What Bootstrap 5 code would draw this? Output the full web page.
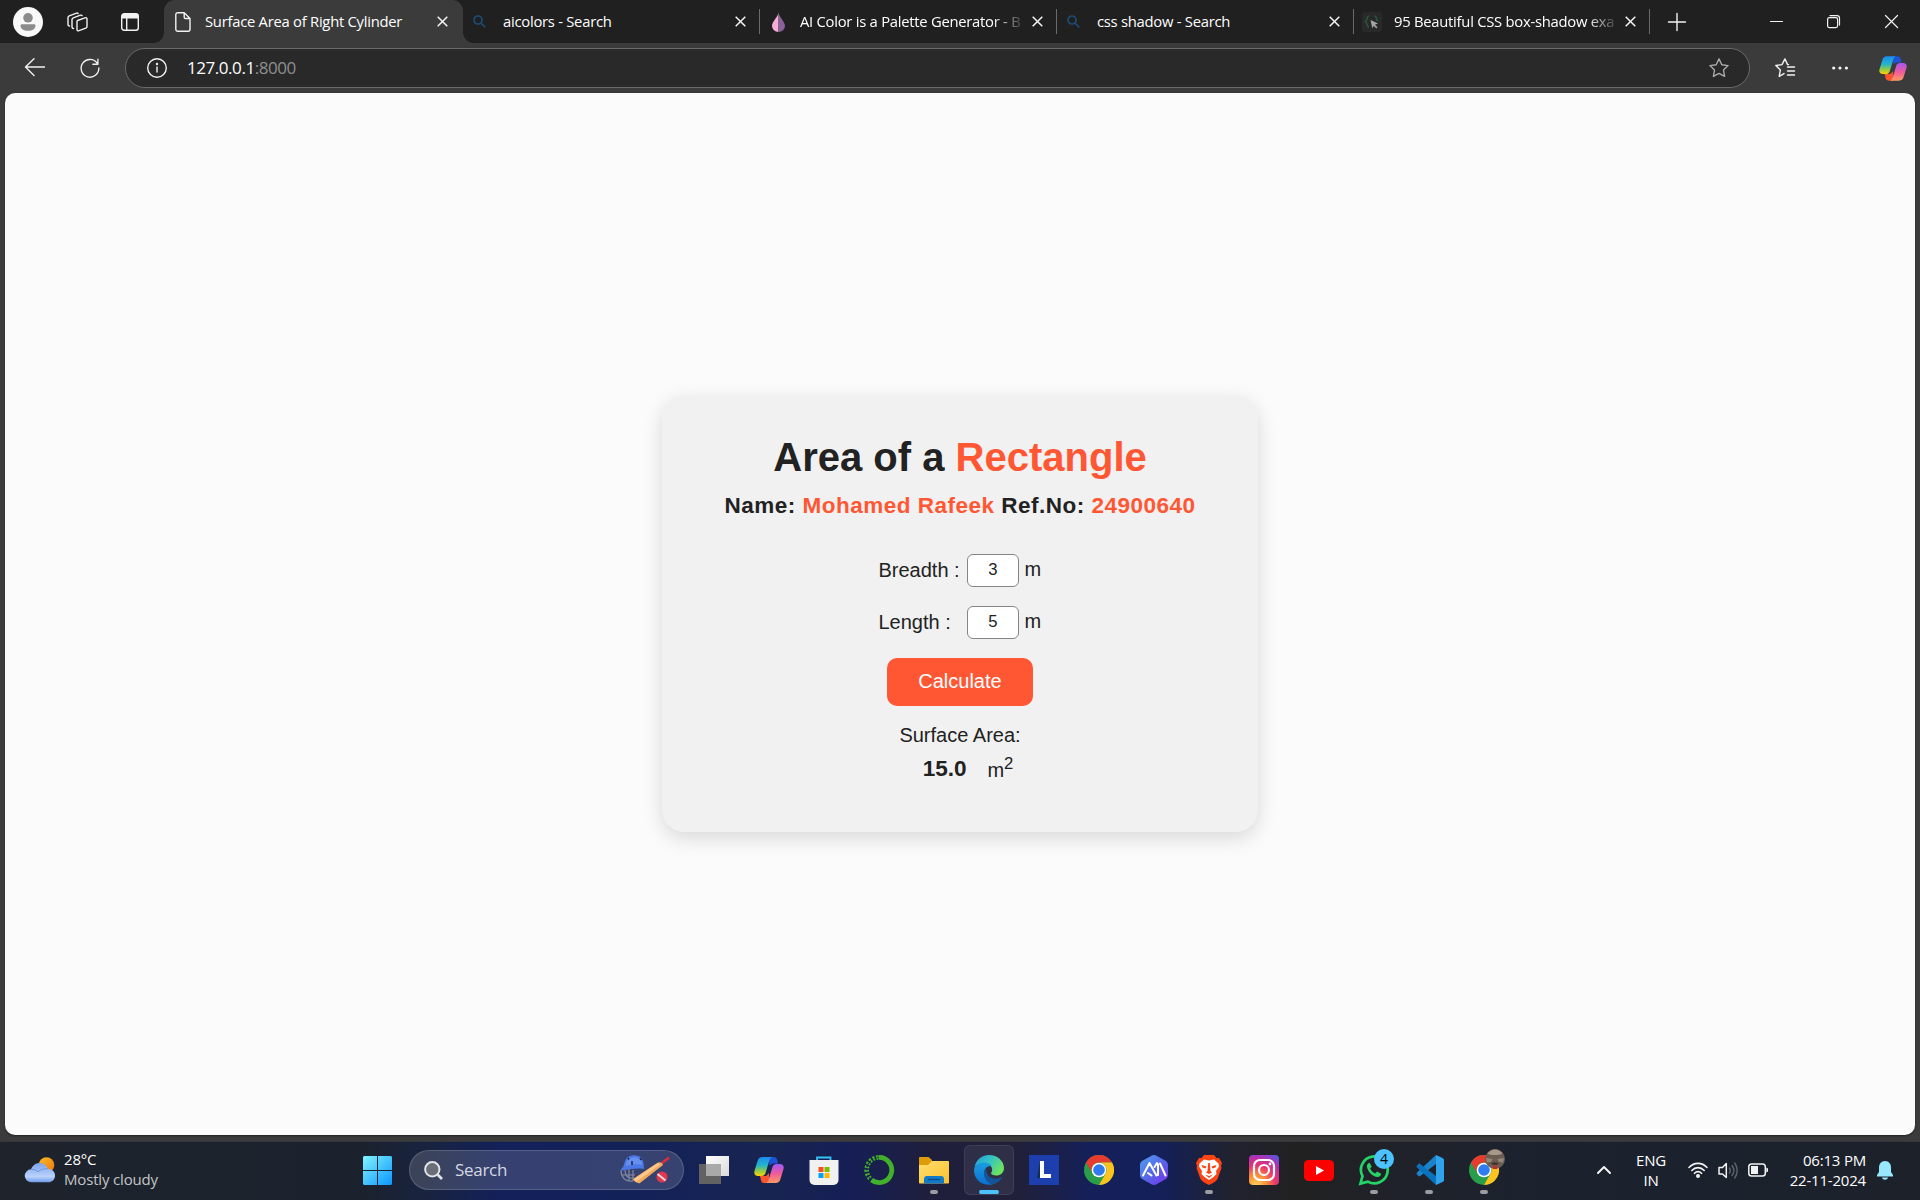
<!DOCTYPE html>
<html lang="en">
<head>
<meta charset="utf-8">
<title>Surface Area of Right Cylinder</title>
<link href="https://cdn.jsdelivr.net/npm/bootstrap@5.3.0/dist/css/bootstrap.min.css" rel="stylesheet">
<style>
  body { width: 1920px; height: 1200px; overflow: hidden; background: #3b3b3b; font-family: "Open Sans", "Noto Sans", sans-serif; color: #fff; }
  svg { display: block; flex: none; overflow: visible; }
  .ln { fill: none; stroke: #f2f2f2; stroke-width: 1.4; stroke-linecap: round; stroke-linejoin: round; }
  .strip { height: 43px; background: #202020; }
  .strip-tools { width: 164px; padding-left: 13px; }
  .tab { width: 297px; height: 43px; padding-left: 8px; font-size: 14.8px; letter-spacing: -.26px; position: relative; }
  .tab-icon { width: 20px; margin-right: 12px; display: flex; justify-content: center; flex: none; }
  .tab-title { width: 223px; white-space: nowrap; overflow: hidden; line-height: 24px; margin-top: -2px; }
  .fade-end { -webkit-mask-image: linear-gradient(90deg, #000 193px, transparent 226px); mask-image: linear-gradient(90deg, #000 193px, transparent 226px); }
  .tab-x { margin-left: 9px; }
  .tab-live { width: 299px; padding-left: 9px; background: #3b3b3b; border-radius: 11px 11px 0 0; }
  .tab-live::before, .tab-live::after { content: ""; position: absolute; bottom: 0; width: 10px; height: 10px; }
  .tab-live::before { left: -10px; background: radial-gradient(circle at 0 0, transparent 9.5px, #3b3b3b 10px); }
  .tab-live::after { right: -10px; background: radial-gradient(circle at 100% 0, transparent 9.5px, #3b3b3b 10px); }
  .tab-sep { border-right: 1px solid #6a6a6a; height: 25px; margin-left: auto; }
  .toolbar { height: 50px; padding-left: 24px; }
  .address { width: 1625px; height: 40px; border: 1px solid #696969; border-radius: 20px; background: #292929; margin-left: 24px; padding-left: 21px; padding-right: 20px; font-size: 17px; letter-spacing: -.45px; }
  .address-text { margin-left: 20px; line-height: 24px; margin-top: -1px; }
  .port { color: #909090; }
  .page { margin: 0 5px; height: 1042px; background: #fbfbfb; border-radius: 10px; font-family: "Liberation Sans", Arial, sans-serif; color: #222; box-shadow: 0 1px 2px #222; }
  .calc { width: 596px; height: 436px; margin-top: 303px; padding-top: 38px; background: #f1f1f1; border-radius: 22px; box-shadow: 0 6px 20px rgba(0,0,0,.14); font-size: 20px; }
  .calc h1 { font-size: 40px; line-height: 46px; font-weight: 700; margin: 0 0 12px; }
  .calc h2 { font-size: 22.5px; line-height: 27px; font-weight: 700; letter-spacing: .5px; margin: 0 0 35px; }
  .hot { color: #ff5733; }
  .field { height: 33px; width: 163px; margin-bottom: 19px; }
  .field label { width: 88px; line-height: 33px; white-space: nowrap; }
  .field input { width: 52px; height: 33px; padding: 0 0 2px 1px; border: 1px solid #858585; border-radius: 6px; text-align: center; font-size: 16.67px; color: #222; background: #fff; margin-right: 6px; }
  .field span { line-height: 31px; }
  .go { width: 146px; height: 48px; background: #ff5733; color: #fff; border: 0; border-radius: 10px; font-size: 20px; padding: 0 0 2px; }
  .go:hover { background: #ff5733; color: #fff; }
  .res-label { line-height: 24px; margin-top: 17px; }
  .res { line-height: 30px; margin-top: 6px; height: 30px; padding-left: 16px; }
  .res b { font-size: 22.5px; margin-right: 21px; margin-top: 1px; }
  .res span { margin-top: 2px; }
  .res sup { font-size: 16.67px; top: -.5em; }
  .taskbar { height: 59px; margin-top: 6px; padding-bottom: 2px; border-top: 1px solid #34373d;
    background: linear-gradient(90deg, #1e232c 0, #1b222d 360px, #182340 430px, #13205a 500px, #132159 640px, #182450 770px, #161f56 850px, #1f1f3c 930px, #20203a 1020px, #15205a 1090px, #13205a 1160px, #20222f 1230px, #212121 1300px, #20222a 1400px, #1b222e 1540px, #1c212a 1920px); }
  .weather { width: 338px; padding-left: 25px; font-size: 15px; line-height: 20px; }
  .weather-text { margin-left: 9px; letter-spacing: -.17px; margin-top: -2px; }
  .sub { color: #c3c5c8; }
  .find { width: 275px; height: 40px; margin-left: 17px; border-radius: 20px; border: 1px solid rgba(255,255,255,.16); background: rgba(255,255,255,.15); padding-left: 14px; padding-right: 13px; font-size: 17px; color: #d5d8e2; }
  .find-text { margin-left: 12px; letter-spacing: -.3px; margin-top: 0; line-height: 24px; }
  .apps { margin-left: 2px; }
  .app { width: 55px; height: 56px; position: relative; }
  .app-open { width: 50px; height: 50px; border-radius: 6px; background: rgba(255,255,255,.07); border: 1px solid rgba(255,255,255,.08); display: flex; align-items: center; justify-content: center; }
  .run::after { content: ""; position: absolute; left: 23.5px; bottom: 4px; width: 8px; height: 4px; border-radius: 2px; background: #9b9ca3; }
  .run-live::after { left: 17.5px; width: 20px; background: #4cc2ff; }
  .count { position: absolute; left: 28px; top: 7px; width: 20px; height: 20px; border-radius: 50%; background: #4cc2ff; color: #000; font-size: 14px; line-height: 20px; text-align: center; }
  .face { position: absolute; left: 29px; top: 7px; }
  .tray { margin-left: auto; padding-right: 27px; font-size: 15px; line-height: 20px; letter-spacing: -.2px; }
  .tray-text { margin-top: -1px; }
</style>
<script src="https://cdn.jsdelivr.net/npm/bootstrap@5.3.0/dist/js/bootstrap.bundle.min.js"></script>
</head>
<body>
<svg width="0" height="0" class="position-absolute">
  <defs>
    <linearGradient id="cpA" x1="0" y1="0" x2="0" y2="1"><stop offset="0" stop-color="#1a8cf0"/><stop offset=".45" stop-color="#25b6c8"/><stop offset=".72" stop-color="#8ccb4b"/><stop offset="1" stop-color="#ffd000"/></linearGradient>
    <linearGradient id="cpB" x1="0" y1="0" x2="0" y2="1"><stop offset="0" stop-color="#a259f7"/><stop offset=".5" stop-color="#ee5a9c"/><stop offset="1" stop-color="#ff9a62"/></linearGradient>
    <symbol id="copilot" viewBox="0 0 30 28">
      <path d="M15 1h5c2 0 2.800 1.500 3.300 3L24 7.500h-5.500l-3 2z" fill="#1f52d8"/>
      <path d="M15 27h-5c-2 0-2.600-1.300-3.100-3L6 20h6l3-3z" fill="#f8552f"/>
      <path d="M8.500 1H18c-1.600.7-2.200 2-2.800 4L11.500 17c-.6 2-2 3-4 3H4c-3 0-4.200-2.200-3.500-5L3.600 4.800C4.300 2.300 6 1 8.500 1z" fill="url(#cpA)"/>
      <path d="M21.500 27H12c1.600-.7 2.200-2 2.800-4L18.500 11c.6-2 2-3 4-3H26c3 0 4.200 2.200 3.500 5l-3.100 10.200C25.700 25.700 24 27 21.500 27z" fill="url(#cpB)"/>
    </symbol>
    <symbol id="chrome" viewBox="0 0 30 30">
      <circle cx="15" cy="15" r="15" fill="#2a9d4b"/>
      <path d="M2 7.500A15 15 0 0 1 28 7.500H15A7.500 7.500 0 0 0 8.500 18.750z" fill="#e63b2e"/>
      <path d="M28 7.500A15 15 0 0 1 15 30L21.500 18.750A7.500 7.500 0 0 0 15 7.500z" fill="#fcc31e"/>
      <circle cx="15" cy="15" r="7.300" fill="#fff"/><circle cx="15" cy="15" r="5.800" fill="#2f7bf0"/>
    </symbol>
    <symbol id="closeX" viewBox="0 0 11 11"><path d="M.7.7l9.600 9.600M10.300.7L.7 10.300" fill="none" stroke="#f4f4f4" stroke-width="1.500"/></symbol>
    <symbol id="lens" viewBox="0 0 13 13"><g fill="none" stroke="#1c4c75" stroke-width="1.700"><circle cx="5" cy="5" r="4"/><path d="M8 8l4.300 4.300"/></g></symbol>
  </defs>
</svg>

<header>
  <div class="strip d-flex align-items-center">
    <div class="strip-tools d-flex align-items-center">
      <svg width="30" height="30" viewBox="0 0 30 30"><circle cx="15" cy="15" r="15" fill="#f8f8f8"/><circle cx="15" cy="10.800" r="4.800" fill="#8b8b8b"/><path d="M9 17.200h12c1 0 1.500.6 1.500 1.500 0 3-3 5.100-7.500 5.100s-7.500-2.100-7.500-5.100c0-.9.500-1.500 1.500-1.500z" fill="#8b8b8b"/></svg>
      <svg class="ln" style="margin-left:24px" width="21" height="20" viewBox="0 0 21 20"><path d="M10.500 8.500l7.500-2.700c1.200-.4 2 .1 2 1.200v7.500c0 .8-.4 1.400-1.200 1.700l-6.800 2.500c-1.200.4-2-.1-2-1.200V9.700c0-.6.100-1 .5-1.200zM6.500 16.500c-1 0-1.500-.5-1.500-1.500V7.500c0-.8.500-1.400 1.300-1.700l7.200-2.600c.7-.2 1.300 0 1.600.5M2.500 14C1.500 14 1 13.500 1 12.500V5.500c0-.8.400-1.400 1.200-1.700l7.300-2.600c.7-.3 1.300-.1 1.600.4"/></svg>
      <svg style="margin-left:33px" width="18" height="18" viewBox="0 0 18 18"><rect x=".7" y=".7" width="16.600" height="16.600" rx="2.500" class="ln"/><path d="M1 1h16v4.500H1zM5 5h1.400v12H5z" fill="#f2f2f2"/></svg>
    </div>
    <div class="tab tab-live d-flex align-items-center">
      <span class="tab-icon"><svg class="ln" width="16" height="20" viewBox="0 0 16 20"><path d="M2.500.8h6.700L15 6.500v10.800c0 1.200-.7 1.900-1.900 1.900H2.800C1.600 19.200.8 18.500.8 17.300V2.600C.8 1.500 1.400.8 2.500.8zM9.200 1v4.200c0 .8.500 1.300 1.300 1.300h4.300"/></svg></span>
      <span class="tab-title">Surface Area of Right Cylinder</span>
      <svg class="tab-x" width="11" height="11"><use href="#closeX"/></svg>
    </div>
    <div class="tab d-flex align-items-center">
      <span class="tab-icon pe-1"><svg width="13" height="13"><use href="#lens"/></svg></span>
      <span class="tab-title">aicolors - Search</span>
      <svg class="tab-x" width="11" height="11"><use href="#closeX"/></svg>
      <span class="tab-sep"></span>
    </div>
    <div class="tab d-flex align-items-center">
      <span class="tab-icon"><svg width="13" height="20" viewBox="0 0 13 20"><path d="M6.500 0C6.500 5 0 9 0 14a6.500 6 0 0 0 6.500 6z" fill="#f5aed6"/><path d="M6.500 0c0 5 6.500 9 6.500 14a6.500 6 0 0 1-6.500 6z" fill="#8a6199"/></svg></span>
      <span class="tab-title fade-end">AI Color is a Palette Generator - B</span>
      <svg class="tab-x" width="11" height="11"><use href="#closeX"/></svg>
      <span class="tab-sep"></span>
    </div>
    <div class="tab d-flex align-items-center">
      <span class="tab-icon pe-1"><svg width="13" height="13"><use href="#lens"/></svg></span>
      <span class="tab-title">css shadow - Search</span>
      <svg class="tab-x" width="11" height="11"><use href="#closeX"/></svg>
      <span class="tab-sep"></span>
    </div>
    <div class="tab d-flex align-items-center" style="width:296px">
      <span class="tab-icon"><svg width="20" height="20" viewBox="0 0 20 20"><rect width="20" height="20" rx="3" fill="#292929"/><path d="M7 4C4.500 4 5.500 8.500 3.500 9.500 5.500 10.500 4.500 15 7 15M12.500 4c2.500 0 1.500 4 3.500 5" fill="none" stroke="#245a39" stroke-width="1.500"/><path d="M8.500 8l7.500 3.500-3 1.200 2.500 2.500-1.300 1.200-2.400-2.600-1.500 2.500z" fill="#a5a5a5"/></svg></span>
      <span class="tab-title fade-end">95 Beautiful CSS box-shadow exa</span>
      <svg class="tab-x ms-2" width="11" height="11"><use href="#closeX"/></svg>
      <span class="tab-sep"></span>
    </div>
    <svg class="ln" style="margin-left:18px" width="18" height="18" viewBox="0 0 18 18"><path d="M9 .5v17M.5 9h17"/></svg>
    <svg class="ln" style="margin-left:84px" width="13" height="13" viewBox="0 0 13 13"><path d="M.5 6.500h12" stroke-width="1.200"/></svg>
    <svg class="ln" style="margin-left:44px;stroke-width:1.200" width="13" height="13" viewBox="0 0 13 13"><rect x=".6" y="2.600" width="10" height="10" rx="1.800"/><path d="M3 .6h7c1.500 0 2.500 1 2.500 2.500v7"/></svg>
    <svg class="ln" style="margin-left:45px;stroke-width:1.200" width="13" height="13" viewBox="0 0 13 13"><path d="M.5.5l12 12M12.500.5l-12 12"/></svg>
  </div>

  <div class="toolbar d-flex align-items-center">
    <svg class="ln" width="21" height="20" viewBox="0 0 21 20"><path d="M20.500 9H1.500M10 .8L1.500 9l8.500 8.500"/></svg>
    <svg class="ln" style="margin-left:35px" width="20" height="21" viewBox="0 0 21 21"><path d="M18 4.800A9.300 9.300 0 1 0 19.800 10M18.800.8V6h-5.300"/></svg>
    <div class="address d-flex align-items-center" style="margin-left:25px">
      <svg class="ln" width="20" height="20" viewBox="0 0 20 20"><circle cx="10" cy="10" r="9.300"/><path d="M10 9v5"/><circle cx="10" cy="6" r=".5"/></svg>
      <span class="address-text">127.0.0.1<span class="port">:8000</span></span>
      <svg class="ms-auto ln" style="stroke:#aaa" width="20" height="20" viewBox="0 0 20 20"><path d="M10 .9l2.800 5.800 6.300.9-4.600 4.400 1.100 6.400L10 15.400l-5.600 3 1.100-6.400L.9 7.600l6.300-.9z"/></svg>
    </div>
    <svg class="ln" style="margin-left:25px" width="20" height="20" viewBox="0 0 20 20"><path d="M9 15.600l-4.800 2.800 1.200-6.500L.8 7.500l6.200-.9L9.900.9l2.700 5.700M12.500 9h7M12.500 13h7M12.500 17h7M12.600 6.600h1"/></svg>
    <svg style="margin-left:37px" width="16" height="4" viewBox="0 0 16 4" fill="#f4f4f4"><circle cx="1.700" cy="2" r="1.600"/><circle cx="8" cy="2" r="1.600"/><circle cx="14.400" cy="2" r="1.600"/></svg>
    <svg style="margin-left:31px" width="28" height="27"><use href="#copilot"/></svg>
  </div>
</header>

<main class="page d-flex justify-content-center align-items-start">
  <section class="calc d-flex flex-column align-items-center">
    <h1>Area of a <span class="hot">Rectangle</span></h1>
    <h2>Name: <span class="hot">Mohamed Rafeek</span> Ref.No: <span class="hot">24900640</span></h2>
    <div class="field d-flex"><label for="b">Breadth :</label><input id="b" type="text" value="3"><span>m</span></div>
    <div class="field d-flex"><label for="l">Length :</label><input id="l" type="text" value="5"><span>m</span></div>
    <button class="btn go" type="button">Calculate</button>
    <div class="res-label">Surface Area:</div>
    <div class="res d-flex"><b>15.0</b><span>m<sup>2</sup></span></div>
  </section>
</main>

<footer class="taskbar d-flex align-items-center">
  <div class="weather d-flex align-items-center">
    <svg width="30" height="26" viewBox="0 0 30 26"><defs><linearGradient id="sun" x1="0" y1="0" x2="1" y2="1"><stop offset="0" stop-color="#fbbd22"/><stop offset="1" stop-color="#ee7410"/></linearGradient><linearGradient id="cl" x1="0" y1="0" x2="0" y2="1"><stop offset="0" stop-color="#7da5ec"/><stop offset=".7" stop-color="#b9d2fb"/><stop offset="1" stop-color="#6e9bea"/></linearGradient></defs><circle cx="21.500" cy="8" r="7.800" fill="url(#sun)"/><path d="M6.500 25.300a6.500 6.500 0 0 1-.5-13c1.500-3.800 4.500-6.300 8.500-6.300 4.200 0 7 2.400 8.200 5.800 4.300.1 7.300 3 7.300 6.700 0 4-3 6.800-7 6.800z" fill="url(#cl)"/><path d="M6 12.300c3 0 5 .8 7 2.500 2-2 5-3.300 9.700-3" fill="none" stroke="#6a93e4" stroke-width="1"/></svg>
    <div class="weather-text">28°C<br><span class="sub">Mostly cloudy</span></div>
  </div>
  <svg style="margin-left:25px" width="29" height="29" viewBox="0 0 29 29"><defs><linearGradient id="win" gradientUnits="userSpaceOnUse" x1="0" y1="0" x2="29" y2="29"><stop offset="0" stop-color="#82f3ff"/><stop offset="1" stop-color="#0a96ff"/></linearGradient></defs><path d="M1 0h13v14H0V1zM15 0h13l1 1v13H15zM0 15h14v14H1l-1-1zM15 15h14v13l-1 1H15z" fill="url(#win)"/></svg>
  <div class="find d-flex align-items-center">
    <svg width="19" height="19" viewBox="0 0 19 19" fill="none" stroke="#e3e4e8" stroke-width="2"><circle cx="8.300" cy="8.300" r="7.200" fill="#6b7078"/><path d="M13.500 13.500l4.500 4.500" stroke-width="2.600"/></svg>
    <span class="find-text">Search</span>
    <svg class="ms-auto" width="50" height="30" viewBox="0 0 50 30"><g fill="none" stroke="#84889f" stroke-width="1.200"><path d="M1 15c0 6 3 12 12 11M5 15c0 5 2 9 9 8M2 20h13M9 14v12M13 15v11"/></g><path d="M1 14C4 12 4 9 5 6c2-5 8-7 13-5 5 1 6 7 6 13-6-1-14 0-22 1.500z" fill="#4c78e6"/><path d="M6 8c2-5 7-7 12-5 3 1.500 4 4 4 7-5-1-11-1-16 1z" fill="#6590f0"/><path d="M12 6v4M20 3l1.500 2M8 3l1 1.500" stroke="#18254e" stroke-width="1.500"/><path d="M42 8l7-5.500" stroke="#dc2d3e" stroke-width="2.600"/><path d="M13 24L37 8c2-1.300 4-1 5 0l1 2-23 18c-2 1-7-2-7-4z" fill="#f3a85c"/><path d="M14 24L38 8l2 1.500L16 27z" fill="#ffc98a"/><circle cx="42" cy="22" r="5.500" fill="#e2374d"/><path d="M37.500 19l8 6.500" stroke="#ffd8dc" stroke-width="2"/></svg>
  </div>

  <div class="apps d-flex">
    <div class="app d-flex align-items-center justify-content-center"><svg width="30" height="28" viewBox="0 0 30 28"><defs><linearGradient id="tv" x1="0" y1="0" x2="1" y2="1"><stop offset="0" stop-color="#fff"/><stop offset="1" stop-color="#d9d9d9"/></linearGradient></defs><path d="M0 8h22v20H0z" fill="#626262"/><path d="M7 0h23v20H7z" fill="url(#tv)"/><path d="M7 8h15v12H7z" fill="#a9a9a9"/></svg></div>
    <div class="app d-flex align-items-center justify-content-center"><svg width="30" height="28"><use href="#copilot"/></svg></div>
    <div class="app d-flex align-items-center justify-content-center"><svg width="30" height="30" viewBox="0 0 30 30"><path d="M8 7V2.500h13.500V7" fill="none" stroke="#35c3f3" stroke-width="1.800"/><path d="M.5 5h29v20a5 5 0 0 1-5 5h-19a5 5 0 0 1-5-5z" fill="#f1f1f1"/><path d="M9.500 12h5v5h-5z" fill="#f25022"/><path d="M15.500 12h5v5h-5z" fill="#7fba00"/><path d="M9.500 18h5v5h-5z" fill="#00a4ef"/><path d="M15.500 18h5v5h-5z" fill="#ffb900"/></svg></div>
    <div class="app d-flex align-items-center justify-content-center"><svg width="30" height="30" viewBox="0 0 30 30" fill="none" stroke="#43b02a"><path d="M14.500 2.400a12.600 12.600 0 1 1-7 22.600" stroke-width="4.800"/><path d="M6 23.500A12.600 12.600 0 0 1 14 2.400" stroke-width="4.600" stroke-dasharray="2.200 1.500"/><path d="M6 23.500A12.600 12.600 0 0 1 14 2.400" stroke="#171e50" stroke-width="1.200" stroke-dasharray="1.500 1.500"/></svg></div>
    <div class="app run d-flex align-items-center justify-content-center"><svg width="30" height="30" viewBox="0 0 30 30"><defs><linearGradient id="fo" x1="0" y1="0" x2="1" y2="1"><stop offset="0" stop-color="#ffdf70"/><stop offset="1" stop-color="#fbc02d"/></linearGradient></defs><path d="M0 3c0-.6.400-1 1-1h8.500L13 5v6H0z" fill="#dd9c08"/><path d="M0 10h9l4-4h16c.6 0 1 .4 1 1v20.500c0 .6-.4 1-1 1H1c-.6 0-1-.4-1-1z" fill="url(#fo)"/><path d="M5 28.500V24c0-1.800 1.200-3 3-3h14c1.800 0 3 1.200 3 3v4.500z" fill="#1279c9"/><path d="M9 24.500h12" stroke="#0a4d87" stroke-width="1.300"/></svg></div>
    <div class="app run run-live d-flex align-items-center justify-content-center"><div class="app-open"><svg width="30" height="30" viewBox="0 0 30 30"><defs><linearGradient id="e1" x1="0" y1="0" x2="1" y2=".5"><stop offset="0" stop-color="#239bd8"/><stop offset=".5" stop-color="#33c1c7"/><stop offset="1" stop-color="#6ce262"/></linearGradient><linearGradient id="e2" x1="0" y1="0" x2="0" y2="1"><stop offset="0" stop-color="#1b9de2"/><stop offset="1" stop-color="#0b6fd0"/></linearGradient></defs><path d="M.5 12.500C1.700 5 7.500 0 15 0c8.800 0 15 6.200 15 13 0 5-3.800 7.500-7.800 7.500-3.200 0-5.200-1-5.200-2.200 0-.8 1.200-1.300 1.200-3.600 0-3.500-3.500-6.200-8-6.200-4.600 0-8.500 1.500-9.700 4z" fill="url(#e1)"/><path d="M0 15C.2 10.500 4.500 7.500 10 7.500c3.500 0 6.300 1.300 7.700 3.600-4-.8-7.400 2.200-7.400 6.600 0 5 2.800 9.500 8.200 11.800C8.500 31.500 0 25 0 15z" fill="url(#e2)"/><path d="M12 13.500c-3 3-2.300 9 1.500 13 1.300 1.400 3 2.500 5 3 3.800-.9 7.100-3.300 9.200-6.300.6-.9.100-1.300-.8-.8-6.500 3.400-14.700.4-14.900-8.900z" fill="#125599"/></svg></div></div>
    <div class="app d-flex align-items-center justify-content-center"><svg width="30" height="30" viewBox="0 0 30 30"><path d="M0 0h30v30H0z" fill="#1d3fae"/><path d="M11 6L8 23h8z" fill="#0b2f55"/><path d="M11 6h4v13h7v4H11z" fill="#fff"/></svg></div>
    <div class="app d-flex align-items-center justify-content-center"><svg width="30" height="30"><use href="#chrome"/></svg></div>
    <div class="app d-flex align-items-center justify-content-center"><svg width="30" height="30" viewBox="0 0 30 30"><defs><linearGradient id="ai" x1="0" y1="0" x2="1" y2="1"><stop offset="0" stop-color="#4fa3ee"/><stop offset=".5" stop-color="#5668e8"/><stop offset="1" stop-color="#7a2ff0"/></linearGradient></defs><path d="M12.500.7c1.600-.9 3.400-.9 5 0l9 5C28 6.600 29 8 29 10v10c0 2-1 3.400-2.500 4.300l-9 5c-1.600.9-3.400.9-5 0l-9-5C2 23.400 1 22 1 20V10c0-2 1-3.400 2.500-4.300z" fill="url(#ai)"/><path d="M4 20.500l6.500-12.500 7 12.500M9 18l3.500 2.500M15.500 12l2.500-4 1 1.500V20M21 8.500l5.500 12" fill="none" stroke="#fff" stroke-width="2" stroke-linecap="round" stroke-linejoin="round"/></svg></div>
    <div class="app run d-flex align-items-center justify-content-center"><svg width="26" height="30" viewBox="0 0 26 30"><path d="M8 0h10l2.500 3L23 3l3 5-1 3 .5 2-4 11c-2 3-5 4.500-8.500 6-3.500-1.500-6.500-3-8.500-6l-4-11L1 11 0 8l3-5 2.500 0z" fill="#fb4314"/><path d="M8 4.500l5 1 5-1 4.500 4 .5 3-3 4.500.5 3-3 3-4.500 3-4.500-3-3-3 .5-3-3-4.500.5-3z" fill="#fff"/><path d="M5.500 10l5 1.500-1 2-3-1zM20.500 10l-5 1.500 1 2 3-1zM12.200 8h1.600l.7 8 1.500 1.500-3 1.500-3-1.500 1.500-1.500zM9 19.500l4 1.500 4-1.500-4 3.500z" fill="#fb4314"/></svg></div>
    <div class="app d-flex align-items-center justify-content-center"><svg width="30" height="30" viewBox="0 0 30 30"><defs><radialGradient id="ig" cx=".25" cy="1" r="1.150"><stop offset="0" stop-color="#ffd45a"/><stop offset=".3" stop-color="#fb8b3b"/><stop offset=".55" stop-color="#e8386b"/><stop offset=".8" stop-color="#b52fb0"/><stop offset="1" stop-color="#5a55dd"/></radialGradient></defs><rect width="30" height="30" rx="4" fill="url(#ig)"/><rect x="5" y="5" width="20" height="20" rx="6" fill="none" stroke="#fff" stroke-width="2.200"/><circle cx="15" cy="15" r="5" fill="none" stroke="#fff" stroke-width="2.200"/><circle cx="21" cy="9" r="1.400" fill="#fff"/></svg></div>
    <div class="app d-flex align-items-center justify-content-center"><svg width="30" height="21" viewBox="0 0 30 21"><rect width="30" height="21" rx="4.500" fill="#f00"/><path d="M12 6l8 4.500-8 4.500z" fill="#fff"/></svg></div>
    <div class="app run d-flex align-items-center justify-content-center"><svg width="30" height="30" viewBox="0 0 30 30"><path d="M1.500 28.500l2-7.300A13.400 13.400 0 1 1 8.800 26.600z" fill="none" stroke="#25d366" stroke-width="2.700"/><path d="M10.500 7.800c-1.800.6-2.800 2-2.500 4.200.7 4.800 5.800 9.800 10.500 10 2 0 3.500-1.200 3.600-3.200l-4-2.200-2 2c-2.300-1-4-2.700-5-5l1.600-2z" fill="#25d366"/></svg><span class="count">4</span></div>
    <div class="app run d-flex align-items-center justify-content-center"><svg width="30" height="30" viewBox="0 0 30 30"><path d="M22 0l-19 17.500c-.6.600-.6 1.400 0 2l1.500 1.500c.6.500 1.200.5 1.700.1L22 9z" fill="#1b83cc"/><path d="M22 30L3 12.500c-.6-.6-.6-1.400 0-2L4.500 9c.6-.5 1.200-.5 1.700-.1L22 21z" fill="#0a72bd"/><path d="M22 0l6.500 3c1 .5 1.500 1.200 1.500 2.300v19.400c0 1.100-.5 1.800-1.500 2.300L22 30z" fill="#2fa4ed"/></svg></div>
    <div class="app run d-flex align-items-center justify-content-center"><svg width="30" height="30"><use href="#chrome"/></svg><svg class="face" width="20" height="20" viewBox="0 0 20 20"><circle cx="10" cy="10" r="10" fill="#6c5d52"/><path d="M2.500 4.500c4-5.500 11-5.500 15 0-3 2-12 2-15 0z" fill="#a8988a"/><path d="M1 9l6.500 1-1.500 3-4 .5zM19 9l-6.500 1 1.500 3 4 .5z" fill="#94877c"/><path d="M6 14c3-1 5-1 8 0l-2 2H8z" fill="#43372f"/><path d="M8 16.500h4V20H8z" fill="#c52c2c"/></svg></div>
  </div>

  <div class="tray d-flex align-items-center">
    <svg class="ln" style="stroke-width:2" width="14" height="8" viewBox="0 0 14 8"><path d="M1 7l6-6 6 6"/></svg>
    <div class="text-center tray-text" style="margin-left:25px;width:30px">ENG<br>IN</div>
    <svg style="margin-left:22px" width="20" height="16" viewBox="0 0 20 16" fill="none" stroke="#f2f2f2" stroke-width="1.600" stroke-linecap="round"><path d="M1 5.500c5-5.500 13-5.500 18 0M3.800 8.500c3.500-3.800 8.900-3.800 12.400 0M6.500 11.300c2-2.200 5-2.200 7 0"/><circle cx="10" cy="14" r="1.200" fill="#f2f2f2"/></svg>
    <svg style="margin-left:10px" width="20" height="17" viewBox="0 0 20 17" fill="none" stroke-width="1.500" stroke-linecap="round" stroke-linejoin="round"><path d="M8.300 1.500v14L4.500 12H1V5.500h3.500z" stroke="#f2f2f2"/><path d="M11.500 6c1 1.500 1 3.500 0 5M14 3.500c2.300 3 2.300 7 0 10M16.700 1c3.300 4.500 3.300 10.500 0 15" stroke="#5d6269"/></svg>
    <svg style="margin-left:10px" width="20" height="14" viewBox="0 0 20 14"><rect x=".8" y="1" width="16.500" height="12" rx="2.800" fill="none" stroke="#f2f2f2" stroke-width="1.500"/><path d="M3 3h7v8H3zM18.300 4.500l1.700 1v3l-1.700 1z" fill="#f2f2f2"/></svg>
    <div class="text-end tray-text" style="margin-left:18px;width:80px">06:13 PM<br>22-11-2024</div>
    <svg style="margin-left:11px" width="16" height="19" viewBox="0 0 16 19" fill="#97e8ff"><path d="M8 0c4 0 6 3 6 6.500V11l2 3v1.500H0V14l2-3V6.500C2 3 4 0 8 0zM5 16.500h6c-.5 3-5.500 3-6 0z"/></svg>
  </div>
</footer>
</body>
</html>
